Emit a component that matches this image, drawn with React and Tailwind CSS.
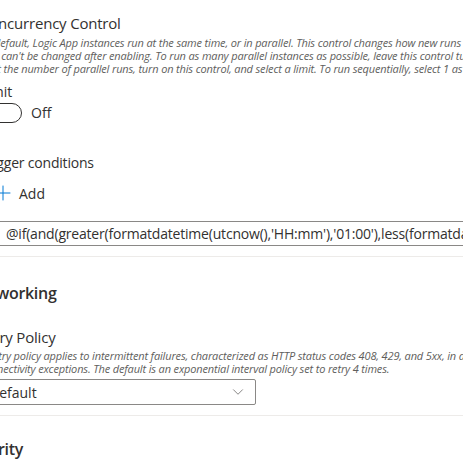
import { ChevronDown, Plus } from "lucide-react";

const concurrencyLines = [
  "By default, Logic App instances run at the same time, or in parallel. This control changes how new runs are queued and",
  "and can't be changed after enabling. To run as many parallel instances as possible, leave this control turned off. To",
  "limit the number of parallel runs, turn on this control, and select a limit. To run sequentially, select 1 as the limit.",
];

const retryLines = [
  "A retry policy applies to intermittent failures, characterized as HTTP status codes 408, 429, and 5xx, in addition to any",
  "connectivity exceptions. The default is an exponential interval policy set to retry 4 times.",
];

const Description = ({ lines }) => (
  <div className="text-[11px] leading-[13px] italic tracking-[-0.15px] text-[#605e5c]">
    {lines.map((line) => (
      <div key={line} className="whitespace-nowrap">
        {line}
      </div>
    ))}
  </div>
);

export default function App() {
  return (
    <div className="w-[463px] h-[463px] overflow-hidden bg-white font-['Open_Sans',sans-serif] text-[#323130]">
      <div className="ml-[-20px] w-[520px] pt-[13px]">
        {/* concurrency */}
        <div className="text-[15px] leading-[20px] tracking-[-0.2px]">Concurrency Control</div>
        <div className="mt-[3px]">
          <Description lines={concurrencyLines} />
        </div>

        <div className="mt-[8px] text-[14px] leading-[18px]">Limit</div>
        <div className="mt-[1px] flex items-center">
          <div className="ml-[2px] w-[40px] h-[20px] rounded-full border border-[#323130] flex items-center px-[4px]">
            <div className="w-[10px] h-[10px] rounded-full bg-[#323130]" />
          </div>
          <span className="ml-[9px] text-[14px]">Off</span>
        </div>

        <div className="mt-[30px] text-[14px] leading-[20px] tracking-[-0.2px]">Trigger conditions</div>
        <div className="mt-[8px] flex items-center">
          <Plus className="w-[24px] h-[24px] ml-[11px] text-[#0078d4]" strokeWidth={1} />
          <span className="ml-[4px] text-[14px]">Add</span>
        </div>

        <div className="mt-[16px] ml-[18px] h-[25px] border border-[#8a8886] rounded-[2px] flex items-center px-[7px] text-[14px] tracking-[-0.2px] whitespace-nowrap overflow-hidden">
          @if(and(greater(formatdatetime(utcnow(),'HH:mm'),'01:00'),less(formatdatetime(utcnow(),'HH:mm'),'05:00')),true,false)
        </div>

        <div className="mt-[10px] border-t border-[#edebe9]" />

        {/* networking */}
        <div className="mt-[25px] ml-[-11px] text-[16px] leading-[22px] font-semibold tracking-[-0.3px]">Networking</div>

        <div className="mt-[23px] ml-[-3px] text-[15px] leading-[20px] tracking-[-0.2px]">Retry Policy</div>
        <div className="mt-[2px]">
          <Description lines={retryLines} />
        </div>
        <div className="mt-[4px] w-[276px] h-[26px] border border-[#8a8886] rounded-[2px] flex items-center justify-between px-[8px] text-[14px]">
          <span>Default</span>
          <ChevronDown className="w-[18px] h-[18px] text-[#605e5c]" strokeWidth={1} />
        </div>

        <div className="mt-[10px] border-t border-[#edebe9]" />

        {/* security */}
        <div className="mt-[22px] ml-[-17px] text-[16px] leading-[22px] font-semibold tracking-[-0.3px]">Security</div>
      </div>
    </div>
  );
}
